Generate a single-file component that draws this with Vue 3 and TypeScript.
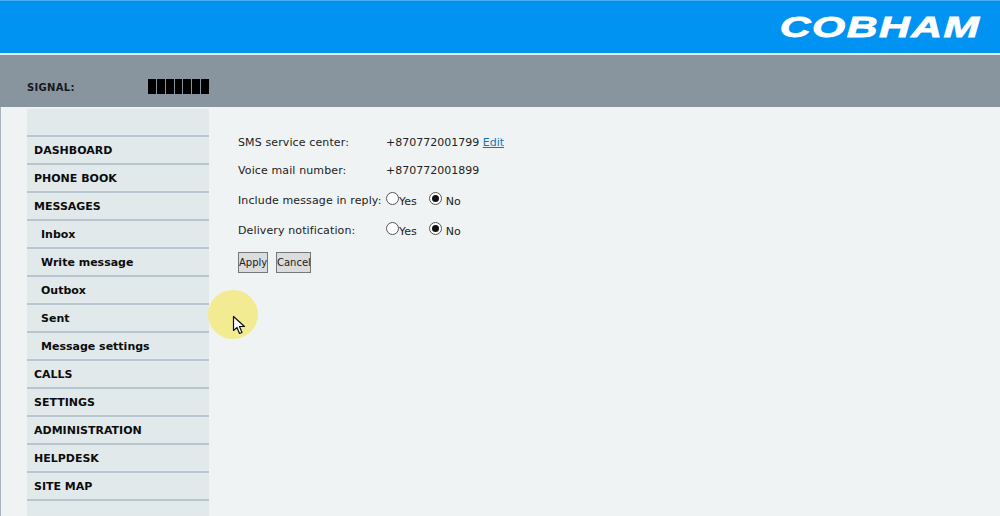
<template>
  <div class="page">
    <header class="banner">
      <span class="logo">COBHAM</span>
    </header>
    <div class="status">
      <span class="signal-label">SIGNAL:</span>
      <div class="signal-bars">
        <i v-for="n in 7" :key="n"></i>
      </div>
    </div>
    <div class="main">
      <nav class="sidebar">
        <div class="nav-top"></div>
        <a v-for="item in menu" :key="item.label" class="nav-item" :class="{ sub: item.sub }">{{ item.label }}</a>
      </nav>
      <section class="content">
        <div class="row row-text">
          <span class="label">SMS service center:</span>
          <span>+870772001799 <a class="edit">Edit</a></span>
        </div>
        <div class="row row-text">
          <span class="label">Voice mail number:</span>
          <span>+870772001899</span>
        </div>
        <div v-for="opt in options" :key="opt" class="row row-radio">
          <span class="label">{{ opt }}</span>
          <span class="radio"></span><span class="radio-text">Yes</span>
          <span class="radio on"></span><span class="radio-text">No</span>
        </div>
        <div class="buttons">
          <button>Apply</button>
          <button>Cancel</button>
        </div>
      </section>
    </div>
    <div class="pointer">
      <svg width="15" height="20" viewBox="0 0 15 20">
        <path d="M1.5 1.5 L1.5 15.5 L5 12.5 L7.5 18.5 L10 17.5 L7.5 11.5 L12.5 11.5 Z" fill="#fff" stroke="#111" stroke-width="1.2" stroke-linejoin="round" />
      </svg>
    </div>
  </div>
</template>

<script setup lang="ts">
const menu = [
  { label: 'DASHBOARD', sub: false },
  { label: 'PHONE BOOK', sub: false },
  { label: 'MESSAGES', sub: false },
  { label: 'Inbox', sub: true },
  { label: 'Write message', sub: true },
  { label: 'Outbox', sub: true },
  { label: 'Sent', sub: true },
  { label: 'Message settings', sub: true },
  { label: 'CALLS', sub: false },
  { label: 'SETTINGS', sub: false },
  { label: 'ADMINISTRATION', sub: false },
  { label: 'HELPDESK', sub: false },
  { label: 'SITE MAP', sub: false },
]

const options = ['Include message in reply:', 'Delivery notification:']
</script>

<style>
html,
body {
  margin: 0;
  overflow: hidden;
}
</style>

<style scoped>
.page {
  position: relative;
  width: 1000px;
  height: 516px;
  overflow: hidden;
  background: #eff3f4;
  font-family: "DejaVu Sans", Verdana, sans-serif;
  font-size: 11px;
  color: #222;
}

.banner {
  height: 52px;
  background: #0093f2;
  border-top: 1px solid #45aef0;
  border-bottom: 2px solid #e4f2fb;
  display: flex;
  justify-content: flex-end;
  align-items: center;
  padding-right: 20px;
}

.logo {
  font-family: "Liberation Sans", Arial, sans-serif;
  font-size: 29px;
  font-weight: 700;
  font-style: italic;
  color: #fff;
  letter-spacing: 1px;
  display: inline-block;
  transform: scaleX(1.47);
  transform-origin: right center;
  -webkit-text-stroke: 0.8px #fff;
}

.status {
  height: 52px;
  background: #88949e;
  display: flex;
  align-items: flex-end;
  padding-left: 27px;
}

.signal-label {
  width: 121px;
  font-size: 10px;
  font-weight: 700;
  letter-spacing: 0.3px;
  color: #16191c;
  line-height: 14px;
  margin-bottom: 12px;
}

.signal-bars {
  display: flex;
  gap: 1px;
  width: 61px;
  margin-bottom: 13px;
}

.signal-bars i {
  flex: 1;
  height: 15px;
  background: #000;
}

.main {
  display: flex;
  height: 409px;
  border-left: 1px solid #a9b4bc;
}

.sidebar {
  width: 182px;
  margin-left: 26px;
  margin-top: 2px;
  background: #e1e9eb;
  display: flex;
  flex-direction: column;
}

.nav-top {
  height: 26px;
}

.nav-item {
  height: 26px;
  line-height: 28px;
  border-top: 2px solid #b8c6d0;
  padding-left: 7px;
  font-weight: 700;
  color: #0c0c0c;
}

.nav-item.sub {
  padding-left: 14px;
}

.nav-item:last-child {
  border-bottom: 2px solid #b8c6d0;
}

.content {
  padding: 21px 0 0 29px;
}

.row {
  display: flex;
  align-items: center;
}

.row-text {
  height: 28px;
}

.row-text + .row-radio {
  margin-top: 1px;
}

.row-radio {
  height: 30px;
}

.label {
  width: 148px;
  flex: none;
  white-space: nowrap;
  letter-spacing: 0.12px;
}

.edit {
  color: #0f77b4;
  text-decoration: underline;
}

.radio {
  width: 11px;
  height: 11px;
  border: 1px solid #555;
  border-radius: 50%;
  background: #fff;
  position: relative;
  margin-top: -4px;
  flex: none;
}

.radio.on {
  margin-left: 12px;
}

.radio.on::after {
  content: "";
  position: absolute;
  left: 2px;
  top: 2px;
  width: 7px;
  height: 7px;
  border-radius: 50%;
  background: #111;
}

.radio-text {
  margin-top: 2px;
}

.radio.on + .radio-text {
  margin-left: 4px;
}

.buttons {
  display: flex;
  gap: 8px;
  margin-top: 7px;
}

button {
  height: 21px;
  padding: 0;
  border: 1px solid #777;
  background: #dcdcdc;
  font-family: "DejaVu Sans", Verdana, sans-serif;
  font-size: 10px;
  color: #222;
}

button:first-child {
  width: 30px;
}

button:last-child {
  width: 35px;
}

.pointer {
  position: absolute;
  left: 208px;
  top: 290px;
  width: 50px;
  height: 49px;
  border-radius: 50%;
  background: #f3eb92;
}

.pointer svg {
  position: absolute;
  left: 24px;
  top: 25px;
}
</style>
